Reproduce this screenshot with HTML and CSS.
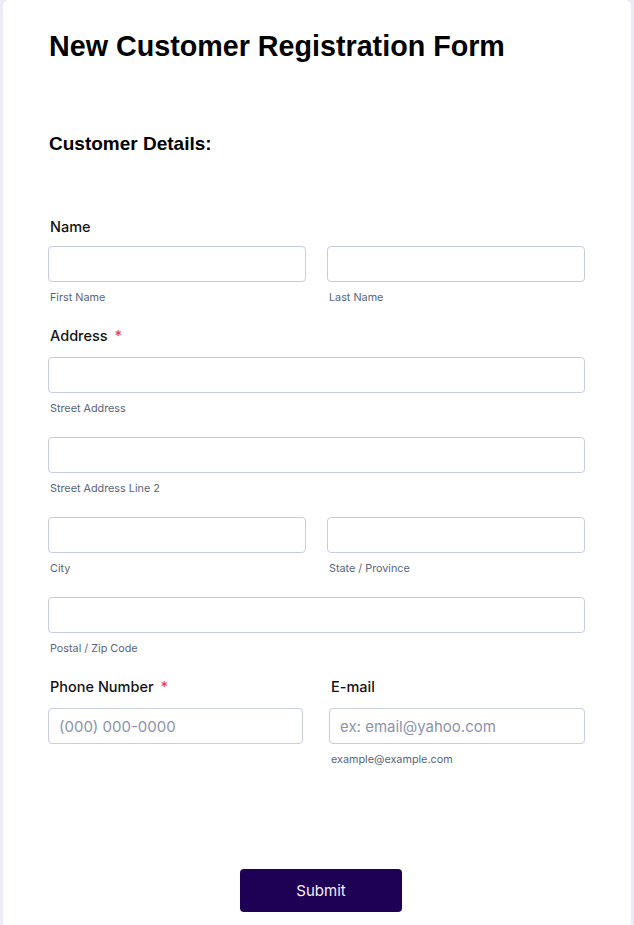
FILE: index.html
```html
<!DOCTYPE html>
<html lang="en">
<head>
<meta charset="utf-8">
<title>New Customer Registration Form</title>
<link rel="stylesheet" href="styles.css">
</head>
<body>
<main class="card">
  <h1 class="title">New Customer Registration Form</h1>
  <h2 class="section">Customer Details:</h2>

  <form class="form">
    <div class="block">
      <div class="label tight">Name</div>
      <div class="row">
        <div class="cell">
          <input class="input" type="text">
          <div class="sub">First Name</div>
        </div>
        <div class="cell">
          <input class="input" type="text">
          <div class="sub">Last Name</div>
        </div>
      </div>
    </div>

    <div class="block">
      <div class="label">Address <span class="req">*</span></div>
      <div class="cell">
        <input class="input" type="text">
        <div class="sub">Street Address</div>
      </div>
      <div class="cell spaced">
        <input class="input" type="text">
        <div class="sub">Street Address Line 2</div>
      </div>
      <div class="row spaced">
        <div class="cell">
          <input class="input" type="text">
          <div class="sub">City</div>
        </div>
        <div class="cell">
          <input class="input" type="text">
          <div class="sub">State / Province</div>
        </div>
      </div>
      <div class="cell spaced">
        <input class="input" type="text">
        <div class="sub">Postal / Zip Code</div>
      </div>
    </div>

    <div class="block row wide">
      <div class="cell">
        <div class="label">Phone Number <span class="req">*</span></div>
        <input class="input" type="text" placeholder="(000) 000-0000">
      </div>
      <div class="cell">
        <div class="label">E-mail</div>
        <input class="input" type="text" placeholder="ex: email@yahoo.com">
        <div class="sub">example@example.com</div>
      </div>
    </div>

    <div class="actions">
      <button class="submit" type="button">Submit</button>
    </div>
  </form>
</main>
</body>
</html>
```

FILE: styles.css
```css
* { box-sizing: border-box; }

html, body {
  margin: 0;
  padding: 0;
  background: #ebebf8;
}

body {
  font-family: Inter, "Noto Sans", sans-serif;
  color: #2c3345;
}

.card {
  margin: 0 3px;
  min-height: 925px;
  background: #ffffff;
  border-radius: 6px 6px 0 0;
  padding: 30px 46px 0 45px;
}

.title {
  margin: 0 0 0 1px;
  font-family: "Liberation Sans", Arial, sans-serif;
  font-weight: 700;
  font-size: 28.7px;
  line-height: 33px;
  color: #000;
}

.section {
  margin: 70px 0 0 1px;
  font-family: "Liberation Sans", Arial, sans-serif;
  font-weight: 700;
  font-size: 19px;
  line-height: 22px;
  color: #000;
}

.form {
  margin-top: 62px;
  width: 537px;
}

.block + .block {
  margin-top: 21px;
}

.label {
  font-size: 14.5px;
  font-weight: 500;
  line-height: 20px;
  padding-left: 2px;
  margin-bottom: 11px;
  color: #121212;
}

.label.tight {
  margin-bottom: 9px;
}

.req {
  color: #f23a3c;
  margin-left: 3px;
}

.row {
  display: grid;
  grid-template-columns: 258px 258px;
  column-gap: 21px;
}

.row.wide {
  grid-template-columns: 255px 256px;
  column-gap: 26px;
}

.spaced {
  margin-top: 21px;
}

.input {
  display: block;
  width: 100%;
  height: 36px;
  margin: 0;
  border: 1px solid #c9cbe0;
  border-radius: 4px;
  background: #fff;
  padding: 0 10px;
  font-family: Inter, "Noto Sans", sans-serif;
  font-size: 15px;
  color: #2c3345;
  outline: none;
}

.input::placeholder {
  color: #8c93ad;
}

.sub {
  margin-top: 9px;
  padding-left: 2px;
  font-size: 10.8px;
  line-height: 14px;
  color: #57647e;
}

.actions {
  margin-top: 102px;
  padding-left: 192px;
}

.submit {
  display: block;
  width: 162px;
  height: 43px;
  border: 0;
  border-radius: 4px;
  background: #1e0155;
  color: #f4f2ff;
  font-family: Inter, "Noto Sans", sans-serif;
  font-size: 15px;
  font-weight: 400;
  cursor: pointer;
}
```
